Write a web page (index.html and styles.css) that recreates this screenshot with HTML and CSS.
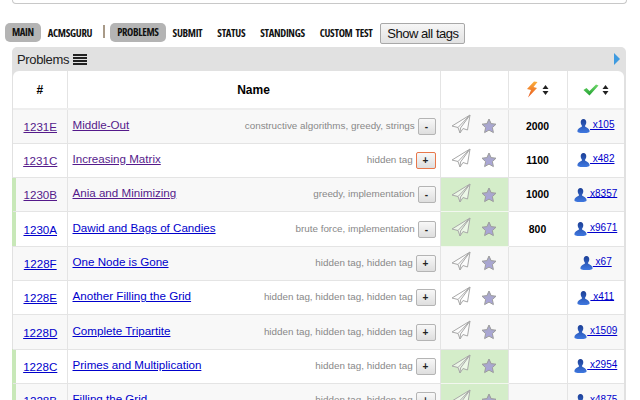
FILE: index.html
```html
<!DOCTYPE html>
<html lang="en">
<head>
  <meta charset="UTF-8" />
  <title>Problems</title>
  <link rel="stylesheet" href="styles.css">
</head>
<body>
  <svg class="sprite" width="0" height="0">
    <defs>
      <linearGradient id="star-fill" x1="0" y1="0" x2="0" y2="1">
        <stop offset="0" stop-color="#a9a9c4" />
        <stop offset="1" stop-color="#a9a4dc" />
      </linearGradient>
      <linearGradient id="user-fill" x1="0" y1="0" x2="0" y2="1">
        <stop offset="0" stop-color="#1c3f96" />
        <stop offset="1" stop-color="#3f78e0" />
      </linearGradient>
      <linearGradient id="bolt-fill" x1="0" y1="0" x2="0" y2="1">
        <stop offset="0" stop-color="#fbb03b" />
        <stop offset="1" stop-color="#e8561e" />
      </linearGradient>
      <linearGradient id="check-fill" x1="0" y1="0" x2="0" y2="1">
        <stop offset="0" stop-color="#6fd86a" />
        <stop offset="1" stop-color="#20a030" />
      </linearGradient>
    </defs>
    <symbol id="plane" viewBox="0 0 20 20">
      <path d="M19 1 L1 12 L7 13.5 L9 19 L12 14.5 L16.5 16 Z M19 1 L7 13.5 M19 1 L9.5 14 L9 19" fill="#fff" fill-opacity="0.55" stroke="#a8a8a8" stroke-width="1" stroke-linejoin="round" />
    </symbol>
    <symbol id="star" viewBox="0 0 16 16">
      <path d="M8 1 L10.1 5.6 L15 6.2 L11.4 9.6 L12.4 14.6 L8 12.1 L3.6 14.6 L4.6 9.6 L1 6.2 L5.9 5.6 Z" fill="url(#star-fill)" stroke="#9c9c9c" stroke-width="1" stroke-linejoin="round" />
    </symbol>
    <symbol id="user" viewBox="0 0 14 16">
      <path d="M7 0.5 C9 0.5 10 2 10 4 C10 6 9 7 8.6 8 C8.6 9.5 13 10 13.5 13 C13.8 15 12 15.5 7 15.5 C2 15.5 0.2 15 0.5 13 C1 10 5.4 9.5 5.4 8 C5 7 4 6 4 4 C4 2 5 0.5 7 0.5 Z" fill="url(#user-fill)" />
    </symbol>
    <symbol id="bolt" viewBox="0 0 12 16">
      <path d="M8 0 L11.5 0.5 L7.5 5.5 L11 6.5 L2 16 L5 8.5 L1 7.5 Z" fill="url(#bolt-fill)" />
    </symbol>
    <symbol id="check" viewBox="0 0 16 12">
      <path d="M0.5 6 L3.5 4 L6.5 7 L13 0.5 L15.5 1.5 L6.5 11.5 Z" fill="url(#check-fill)" />
    </symbol>
    <symbol id="sort" viewBox="0 0 6 10">
      <path d="M3 0 L6 4 L0 4 Z M3 10 L6 6 L0 6 Z" fill="#222" />
    </symbol>
  </svg>

  <div class="top-bar"></div>

  <nav class="menu">
    <a class="pill">MAIN</a>
    <a>ACMSGURU</a>
    <span class="sep"></span>
    <a class="pill">PROBLEMS</a>
    <a>SUBMIT</a>
    <a>STATUS</a>
    <a>STANDINGS</a>
    <a>CUSTOM TEST</a>
    <button class="show-tags">Show all tags</button>
  </nav>

  <section class="panel">
    <div class="panel-title">
      <span>Problems</span>
      <span class="list-icon"><i></i><i></i><i></i><i></i></span>
      <span class="arrow"></span>
    </div>
    <div class="table-wrap">
      <table class="problems">
        <colgroup>
          <col class="c-id"><col class="c-name"><col class="c-act"><col class="c-pts"><col class="c-solved">
        </colgroup>
        <thead>
          <tr>
            <th>#</th>
            <th>Name</th>
            <th></th>
            <th><svg class="i-bolt"><use href="#bolt" /></svg> <svg class="i-sort"><use href="#sort" /></svg></th>
            <th><svg class="i-check"><use href="#check" /></svg> <svg class="i-sort"><use href="#sort" /></svg></th>
          </tr>
        </thead>
        <tbody>
          <tr>
            <td class="id"><a class="seen" href="#">1231E</a></td>
            <td><div class="name"><a class="seen" href="#">Middle-Out</a><span class="tags">constructive algorithms, greedy, strings <button class="tag-btn">-</button></span></div></td>
            <td class="act"><svg class="i-plane"><use href="#plane" /></svg><svg class="i-star"><use href="#star" /></svg></td>
            <td class="pts">2000</td>
            <td class="solved"><svg class="i-user"><use href="#user" /></svg><a href="#">&nbsp;x105</a></td>
          </tr>
          <tr>
            <td class="id"><a class="seen" href="#">1231C</a></td>
            <td><div class="name"><a class="seen" href="#">Increasing Matrix</a><span class="tags">hidden tag <button class="tag-btn more focus">+</button></span></div></td>
            <td class="act"><svg class="i-plane"><use href="#plane" /></svg><svg class="i-star"><use href="#star" /></svg></td>
            <td class="pts">1100</td>
            <td class="solved"><svg class="i-user"><use href="#user" /></svg><a href="#">&nbsp;x482</a></td>
          </tr>
          <tr class="done">
            <td class="id"><a class="seen" href="#">1230B</a></td>
            <td><div class="name"><a class="seen" href="#">Ania and Minimizing</a><span class="tags">greedy, implementation <button class="tag-btn">-</button></span></div></td>
            <td class="act"><svg class="i-plane"><use href="#plane" /></svg><svg class="i-star"><use href="#star" /></svg></td>
            <td class="pts">1000</td>
            <td class="solved"><svg class="i-user"><use href="#user" /></svg><a href="#">&nbsp;x8357</a></td>
          </tr>
          <tr class="done">
            <td class="id"><a href="#">1230A</a></td>
            <td><div class="name"><a href="#">Dawid and Bags of Candies</a><span class="tags">brute force, implementation <button class="tag-btn">-</button></span></div></td>
            <td class="act"><svg class="i-plane"><use href="#plane" /></svg><svg class="i-star"><use href="#star" /></svg></td>
            <td class="pts">800</td>
            <td class="solved"><svg class="i-user"><use href="#user" /></svg><a href="#">&nbsp;x9671</a></td>
          </tr>
          <tr>
            <td class="id"><a href="#">1228F</a></td>
            <td><div class="name"><a href="#">One Node is Gone</a><span class="tags">hidden tag, hidden tag <button class="tag-btn more">+</button></span></div></td>
            <td class="act"><svg class="i-plane"><use href="#plane" /></svg><svg class="i-star"><use href="#star" /></svg></td>
            <td class="pts"></td>
            <td class="solved"><svg class="i-user"><use href="#user" /></svg><a href="#">&nbsp;x67</a></td>
          </tr>
          <tr>
            <td class="id"><a href="#">1228E</a></td>
            <td><div class="name"><a href="#">Another Filling the Grid</a><span class="tags">hidden tag, hidden tag, hidden tag <button class="tag-btn more">+</button></span></div></td>
            <td class="act"><svg class="i-plane"><use href="#plane" /></svg><svg class="i-star"><use href="#star" /></svg></td>
            <td class="pts"></td>
            <td class="solved"><svg class="i-user"><use href="#user" /></svg><a href="#">&nbsp;x411</a></td>
          </tr>
          <tr>
            <td class="id"><a href="#">1228D</a></td>
            <td><div class="name"><a href="#">Complete Tripartite</a><span class="tags">hidden tag, hidden tag, hidden tag <button class="tag-btn more">+</button></span></div></td>
            <td class="act"><svg class="i-plane"><use href="#plane" /></svg><svg class="i-star"><use href="#star" /></svg></td>
            <td class="pts"></td>
            <td class="solved"><svg class="i-user"><use href="#user" /></svg><a href="#">&nbsp;x1509</a></td>
          </tr>
          <tr class="done">
            <td class="id"><a href="#">1228C</a></td>
            <td><div class="name"><a href="#">Primes and Multiplication</a><span class="tags">hidden tag, hidden tag <button class="tag-btn more">+</button></span></div></td>
            <td class="act"><svg class="i-plane"><use href="#plane" /></svg><svg class="i-star"><use href="#star" /></svg></td>
            <td class="pts"></td>
            <td class="solved"><svg class="i-user"><use href="#user" /></svg><a href="#">&nbsp;x2954</a></td>
          </tr>
          <tr class="done">
            <td class="id"><a href="#">1228B</a></td>
            <td><div class="name"><a href="#">Filling the Grid</a><span class="tags">hidden tag, hidden tag <button class="tag-btn more">+</button></span></div></td>
            <td class="act"><svg class="i-plane"><use href="#plane" /></svg><svg class="i-star"><use href="#star" /></svg></td>
            <td class="pts"></td>
            <td class="solved"><svg class="i-user"><use href="#user" /></svg><a href="#">&nbsp;x4875</a></td>
          </tr>
        </tbody>
      </table>
    </div>
  </section>
</body>
</html>
```

FILE: styles.css
```css
* {
  box-sizing: border-box;
}

html, body {
  height: 400px;
  overflow: hidden;
}

body {
  margin: 0;
  background: #fff;
  color: #000;
  font-family: "Liberation Sans", Arial, sans-serif;
}

.sprite {
  display: block;
  height: 0;
}

.top-bar {
  height: 4px;
  margin: 0 13px 0 12px;
  border: 1px solid #c8c8c8;
  border-top: none;
  border-radius: 0 0 4px 4px;
}

.menu {
  display: flex;
  align-items: center;
  height: 22px;
  margin: 18px 0 3px 5px;
  font-family: "Open Sans", "Liberation Sans", sans-serif;
  font-size: 10.6px;
  font-stretch: 75%;
  font-weight: 700;
  letter-spacing: -0.33px;
  word-spacing: 1.5px;
  color: #111;
}

.menu a {
  margin-right: 15px;
  white-space: nowrap;
}

.menu .pill {
  height: 19px;
  margin-right: 7px;
  margin-top: -2px;
  padding: 0 7px;
  line-height: 19px;
  background: #b4b4b4;
  border-radius: 5px;
}

.sep {
  width: 2px;
  height: 13px;
  margin: -3px 5px 0 -4px;
  background: #a89a88;
}

.show-tags {
  width: 85px;
  height: 21px;
  margin-left: -7px;
  padding: 0;
  font-family: "Liberation Sans", sans-serif;
  font-size: 13px;
  letter-spacing: -0.45px;
  word-spacing: 0;
  color: #111;
  background: linear-gradient(#f6f6f6, #e2e2e2);
  border: 1px solid #a8a8a8;
  border-radius: 2px;
}

.panel {
  width: 614px;
  margin-left: 12px;
  padding: 0 2px 2px 1px;
  background: #e1e1e1;
  border-radius: 5px 5px 0 0;
}

.panel-title {
  display: flex;
  align-items: center;
  height: 24px;
  padding-left: 4px;
  font-size: 13px;
  letter-spacing: -0.35px;
  color: #222;
}

.list-icon {
  display: flex;
  flex-direction: column;
  gap: 1px;
  width: 14px;
  margin-left: 4px;
  margin-top: 1px;
}

.list-icon i {
  display: block;
  height: 2px;
  background: #222;
}

.arrow {
  margin-left: auto;
  margin-right: 4px;
  border-left: 6px solid #3f9be0;
  border-top: 6px solid transparent;
  border-bottom: 6px solid transparent;
}

.table-wrap {
  background: #fff;
  border-radius: 6px 6px 0 0;
}

.problems {
  width: 611px;
  table-layout: fixed;
  border-collapse: collapse;
  font-size: 11.6px;
}

.c-id { width: 54px; }
.c-name { width: 373px; }
.c-act { width: 68px; }
.c-pts { width: 59px; }
.c-solved { width: 57px; }

.problems th,
.problems td {
  padding: 0;
  border: 1px solid #e4e4e4;
  text-align: center;
}

.problems th:first-child,
.problems td:first-child {
  border-left: none;
}

.problems th:last-child,
.problems td:last-child {
  border-right: none;
}

.problems tr:first-child th {
  border-top: none;
}

.problems th {
  height: 38px;
  font-size: 12px;
  font-weight: bold;
  border-bottom: 2px solid #eee;
}

.problems tbody tr {
  height: 34.33px;
}

.problems tbody tr:nth-child(odd) {
  background: #f8f8f8;
}

.problems a {
  color: #0000cc;
}

.problems a.seen {
  color: #551a8b;
}

.problems td.id {
  padding-left: 1px;
}

.done td.id {
  box-shadow: inset 3px 0 0 #c8e8b8, -1px 0 0 #c8e8b8;
}

.problems .done td.act {
  background: #d4edc9;
  border-bottom-color: #f2f7ef;
}

.name {
  display: flex;
  justify-content: space-between;
  align-items: center;
  padding: 0 4px 0 5px;
}

.name > a {
  margin-bottom: 4px;
}

.tags {
  font-size: 9.85px;
  color: #888;
  white-space: nowrap;
}

.tag-btn {
  width: 18px;
  height: 17px;
  margin-left: 0;
  padding: 0;
  vertical-align: middle;
  font-family: "Liberation Sans", sans-serif;
  font-size: 10px;
  font-weight: bold;
  color: #222;
  background: linear-gradient(#f8f8f8, #dedede);
  border: 1px solid #b4b4b4;
  border-radius: 2px;
}

.tag-btn.more {
  width: 20px;
}

.tag-btn.focus {
  border-color: #e8774a;
}

.act svg {
  vertical-align: middle;
}

.act .i-plane {
  width: 20px;
  height: 20px;
  margin-right: 10px;
  margin-bottom: 4px;
}

.i-star {
  width: 16px;
  height: 16px;
}

.pts {
  font-size: 10.4px;
  font-weight: bold;
}

.solved {
  white-space: nowrap;
  font-size: 10px;
}

.solved a {
  vertical-align: 1px;
}

.i-user {
  width: 13px;
  height: 16px;
  vertical-align: middle;
}

.i-bolt {
  width: 12px;
  height: 17px;
  vertical-align: middle;
}

.i-check {
  width: 16px;
  height: 12px;
  vertical-align: middle;
}

.i-sort {
  width: 7px;
  height: 10px;
  vertical-align: middle;
}
```
